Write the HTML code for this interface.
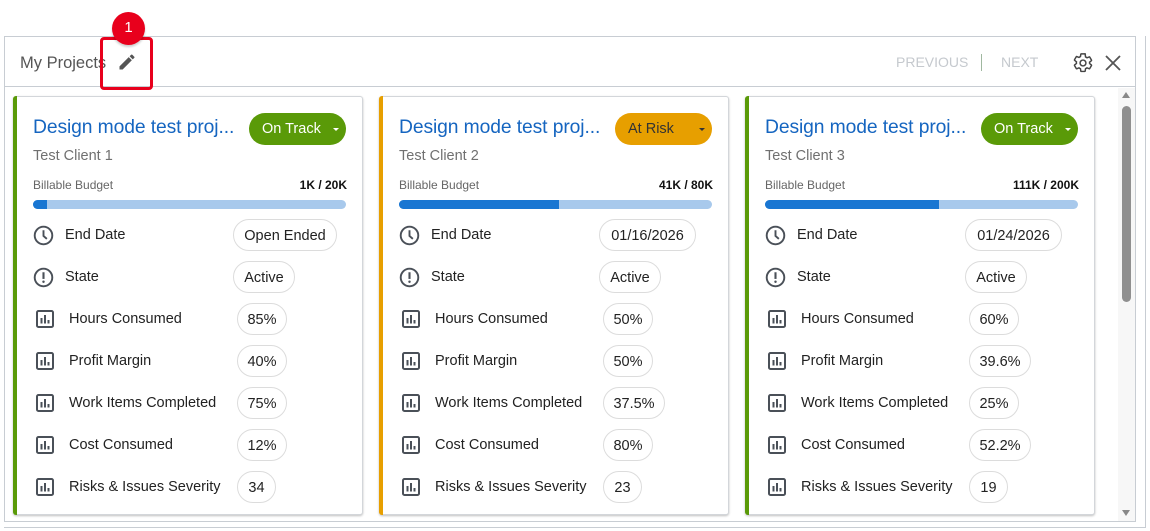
<!DOCTYPE html>
<html><head><style>
*{box-sizing:border-box;margin:0;padding:0}
body{width:1150px;height:531px;background:#fff;font-family:"Liberation Sans",sans-serif;position:relative;overflow:hidden;color:#222}
.abs{position:absolute}
.panel{left:4px;top:36px;width:1132px;height:486px;border:1px solid #c8cdd3;border-right:1px solid #c8cdd3}
.hdr{left:5px;top:37px;width:1130px;height:50px;border-bottom:1px solid #c8cdd3}
.card{position:absolute;top:96px;width:350px;height:419px;border:1px solid #d3d6da;border-radius:3px;box-shadow:0 1px 2px rgba(0,0,0,.25);background:#fff}
.card .lb{position:absolute;left:-1px;top:-1px;bottom:-1px;width:4px;border-radius:3px 0 0 3px}
.title{position:absolute;left:19px;top:20px;font-size:19.3px;color:#1565c0;letter-spacing:-.1px}
.pill{position:absolute;left:235px;top:16px;width:97px;height:32px;border-radius:16px;color:#fff;font-size:14.5px;line-height:32px;padding-left:13px}
.pill:after{content:"";position:absolute;right:7px;top:15px;border:3px solid transparent;border-top:3.5px solid currentColor}
.client{position:absolute;left:19px;top:51px;font-size:14.5px;color:#707070}
.bb{position:absolute;left:19px;top:81px;font-size:12px;color:#666}
.bv{position:absolute;right:15px;top:81px;font-size:12px;font-weight:bold;color:#111}
.bar{position:absolute;left:19px;top:103px;width:313px;height:9px;border-radius:5px;background:#a8c9ec;overflow:hidden}
.bar i{display:block;height:9px;background:#1976d2}
.row{position:absolute;left:19px;height:32px;width:320px}
.row .lab{position:absolute;top:8px;font-size:14.5px;color:#222}
.row .val{position:absolute;top:0;height:32px;line-height:32px;border:1px solid #dcdcdc;border-radius:16px;font-size:14.5px;text-align:center;color:#222}
.row svg{position:absolute}
</style></head><body>
<div class="abs" style="left:1145px;top:36px;width:1px;height:492px;background:#c8cdd3"></div>
<div class="abs" style="left:4px;top:527px;width:1142px;height:1px;background:#c8cdd3"></div>
<div class="abs panel"></div>
<div class="abs hdr"></div>
<div class="abs" style="left:20px;top:54px;font-size:16.5px;color:#555">My Projects</div>
<svg class="abs" style="left:117px;top:52px" width="20" height="20" viewBox="0 0 24 24"><path d="M3 17.25V21h3.75L17.81 9.94l-3.75-3.75L3 17.25zM20.71 7.04a1 1 0 000-1.41l-2.34-2.34a1 1 0 00-1.41 0l-1.83 1.830 3.75 3.75 1.83-1.83z" fill="#555"/></svg>
<div class="abs" style="left:100px;top:37px;width:53px;height:53px;border:3px solid #e8001c;border-radius:4px"></div>
<div class="abs" style="left:112px;top:12px;width:33px;height:33px;border-radius:50%;background:#e8001c;color:#fff;font-size:15px;text-align:center;line-height:31px;box-shadow:0 2px 2px rgba(0,0,0,.2)">1</div>
<div class="abs" style="left:896px;top:54px;font-size:14px;color:#c5c9ce">PREVIOUS</div>
<div class="abs" style="left:981px;top:54px;width:1px;height:17px;background:#a0b8a0"></div>
<div class="abs" style="left:1001px;top:54px;font-size:14px;color:#c5c9ce">NEXT</div>
<svg class="abs" style="left:1072px;top:52px" width="22" height="22" viewBox="0 0 24 24"><path d="M19.14 12.94c.04-.3.06-.61.06-.94s-.02-.64-.07-.94l2.03-1.58a.49.49 0 00.12-.61l-1.92-3.32a.49.49 0 00-.59-.22l-2.39.96a7 7 0 00-1.620-.94l-.36-2.54A.48.48 0 0013.92 2h-3.84a.48.48 0 00-.48.41l-.36 2.54c-.59.24-1.13.57-1.62.94l-2.39-.96a.48.48 0 00-.59.22L2.72 8.47a.47.47 0 00.12.61l2.03 1.58c-.05.3-.07.62-.07.94s.02.64.07.94l-2.03 1.58a.49.49 0 00-.12.61l1.920 3.32c.12.22.37.29.59.22l2.39-.96c.5.38 1.03.7 1.62.94l.36 2.54c.05.24.24.41.48.41h3.84c.24 0 .44-.17.47-.41l.36-2.54c.59-.24 1.13-.56 1.62-.94l2.39.96c.22.08.47 0 .59-.22l1.92-3.32a.47.47 0 00-.12-.61l-2.01-1.58z" fill="none" stroke="#444" stroke-width="1.6"/><circle cx="12" cy="12" r="3.2" fill="none" stroke="#444" stroke-width="1.6"/></svg>
<svg class="abs" style="left:1105px;top:55px" width="16" height="16" viewBox="0 0 16 16"><path d="M1 1L15 15M15 1L1 15" stroke="#555" stroke-width="1.8"/></svg>
<div class="abs" style="left:1118px;top:88px;width:17px;height:433px;background:#f7f7f7"></div>
<div class="abs" style="left:1122px;top:92px;border:4px solid transparent;border-bottom:6px solid #888;border-top:0"></div>
<div class="abs" style="left:1122px;top:106px;width:9px;height:196px;border-radius:5px;background:#8f8f8f"></div>
<div class="abs" style="left:1122px;top:510px;border:4px solid transparent;border-top:6px solid #888;border-bottom:0"></div>

<div id="cards"></div>
<script>
const cards=[
{x:13,c:'#5a9a08',st:'On Track',pc:'#fff',client:'Test Client 1',bv:'1K / 20K',p:4.5,v:['Open Ended','Active','85%','40%','75%','12%','34'],w:[104,62,50,50,50,50,39]},
{x:379,c:'#e79f00',st:'At Risk',pc:'#333',client:'Test Client 2',bv:'41K / 80K',p:51,v:['01/16/2026','Active','50%','50%','37.5%','80%','23'],w:[97,62,50,50,62,50,39]},
{x:745,c:'#5a9a08',st:'On Track',pc:'#fff',client:'Test Client 3',bv:'111K / 200K',p:55.5,v:['01/24/2026','Active','60%','39.6%','25%','52.2%','19'],w:[97,62,50,62,50,62,39]}];
const labs=['End Date','State','Hours Consumed','Profit Margin','Work Items Completed','Cost Consumed','Risks & Issues Severity'];
const clock='<svg style="left:0;top:6px" width="21" height="21" viewBox="0 0 22 22"><circle cx="11" cy="11" r="9.2" fill="none" stroke="#4a5058" stroke-width="2"/><path d="M11 5.5V11.5L14.5 14.5" fill="none" stroke="#4a5058" stroke-width="2"/></svg>';
const excl='<svg style="left:0;top:6px" width="21" height="21" viewBox="0 0 22 22"><circle cx="11" cy="11" r="9.2" fill="none" stroke="#4a5058" stroke-width="2"/><path d="M11 5.5V12.5" stroke="#4a5058" stroke-width="2.2"/><circle cx="11" cy="15.5" r="1.3" fill="#4a5058"/></svg>';
const bar='<svg style="left:3px;top:7px" width="18" height="18" viewBox="0 0 18 18"><rect x="1" y="1" width="16" height="16" rx="1.5" fill="none" stroke="#4a5058" stroke-width="2"/><path d="M5.5 13.5V8M9 13.5V5M12.5 13.5V10" stroke="#4a5058" stroke-width="2"/></svg>';
let h='';
cards.forEach(k=>{
h+=`<div class="card" style="left:${k.x}px"><div class="lb" style="background:${k.c}"></div>
<div class="title">Design mode test proj...</div>
<div class="pill" style="background:${k.c};color:${k.pc}">${k.st}</div>
<div class="client">${k.client}</div>
<div class="bb">Billable Budget</div><div class="bv">${k.bv}</div>
<div class="bar"><i style="width:${k.p}%"></i></div>`;
labs.forEach((l,i)=>{
const top=122+i*42;
const ic=i==0?clock:i==1?excl:bar;
const lx=i<2?32:36, vx=i<2?200:204;
h+=`<div class="row" style="top:${top}px">${ic}<div class="lab" style="left:${lx}px">${l}</div><div class="val" style="left:${vx}px;width:${k.w[i]}px">${k.v[i]}</div></div>`;
});
h+='</div>';
});
document.getElementById('cards').innerHTML=h;
</script>
</body></html>
